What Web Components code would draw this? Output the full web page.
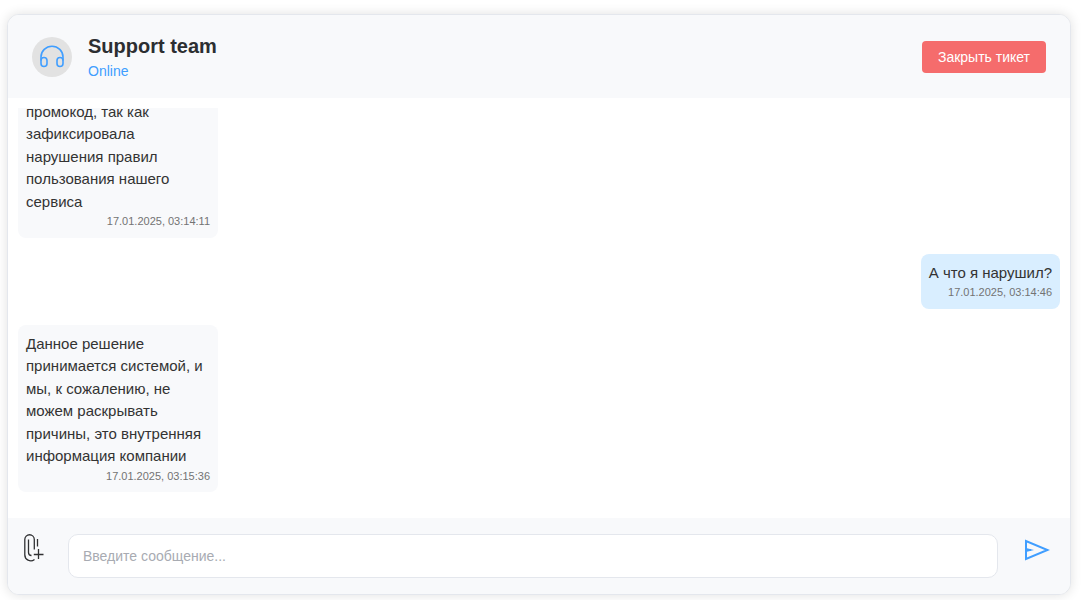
<!DOCTYPE html>
<html lang="ru">
<head>
<meta charset="utf-8">
<meta name="viewport" content="width=device-width, initial-scale=1">
<title>Support team</title>
<style>
  body { margin: 0; background: #fff; color: #2c2e31; font-family: "Liberation Sans", Arial, sans-serif; }
</style>
</head>
<body>
<support-chat>
  <chat-header slot="header" name="Support team" status="Online">
    <close-button>Закрыть тикет</close-button>
  </chat-header>
  <chat-message time="17.01.2025, 03:14:11">промокод, так как зафиксировала нарушения правил пользования нашего сервиса</chat-message>
  <chat-message mine time="17.01.2025, 03:14:46">А что я нарушил?</chat-message>
  <chat-message time="17.01.2025, 03:15:36">Данное решение принимается системой, и мы, к сожалению, не можем раскрывать причины, это внутренняя информация компании</chat-message>
  <chat-composer slot="footer"></chat-composer>
</support-chat>
<script>
  class BaseElement extends HTMLElement {
    constructor() {
      super();
      this.attachShadow({ mode: "open" }).innerHTML = "<style>*{box-sizing:border-box}:host{box-sizing:border-box}</style>" + this.constructor.markup;
    }
  }

  customElements.define("support-chat", class extends BaseElement {
    static markup = `
      <style>
        :host { display: block; height: 100vh; padding: 14px 11px 5px 7px; }
        section { display: flex; flex-direction: column; height: 100%; border: 1px solid #e4e7ed; border-radius: 12px; overflow: hidden; background: #fff; box-shadow: 0 0 12px rgba(0, 0, 0, .12); }
        main { flex: 1; min-height: 0; padding: 10px; display: flex; }
        .list { flex: 1; display: flex; flex-direction: column; justify-content: flex-end; gap: 16px; padding-bottom: 16px; overflow: hidden; }
      </style>
      <section>
        <slot name="header"></slot>
        <main><div class="list"><slot></slot></div></main>
        <slot name="footer"></slot>
      </section>`;
  });

  customElements.define("chat-header", class extends BaseElement {
    static markup = `
      <style>
        :host { display: block; flex: none; }
        header { display: flex; align-items: center; gap: 16px; padding: 16px 24px; background: #f8f9fb; }
        .avatar { width: 40px; height: 40px; border-radius: 50%; background: #e2e2e2; display: grid; place-items: center; }
        svg { width: 24px; height: 24px; display: block; }
        .who { flex: 1; }
        h1 { margin: 0; font-size: 20px; line-height: 30px; font-weight: 700; }
        p { margin: 0; font-size: 14px; line-height: 21px; color: #409eff; }
      </style>
      <header>
        <div class="avatar">
          <svg viewBox="0 0 24 24" fill="none" stroke="#409eff" stroke-width="1.6" aria-hidden="true">
            <path d="M1 15.500V12a11 10.800 0 0 1 22 0v3.500"/>
            <rect x="1" y="12.500" width="6" height="9" rx="3"/>
            <rect x="17" y="12.500" width="6" height="9" rx="3"/>
          </svg>
        </div>
        <div class="who"><h1></h1><p></p></div>
        <slot></slot>
      </header>`;
    connectedCallback() {
      this.shadowRoot.querySelector("h1").textContent = this.getAttribute("name");
      this.shadowRoot.querySelector("p").textContent = this.getAttribute("status");
    }
  });

  customElements.define("close-button", class extends BaseElement {
    static markup = `
      <style>
        :host { display: block; }
        button { display: block; height: 32px; padding: 0 16px; border: 0; border-radius: 4px; background: #f56c6c; color: #fff; font: 14px "Liberation Sans", Arial, sans-serif; cursor: pointer; }
      </style>
      <button type="button"><slot></slot></button>`;
  });

  customElements.define("chat-message", class extends BaseElement {
    static markup = `
      <style>
        :host { display: block; flex: none; max-width: 200px; padding: 8px; border-radius: 8px; background: #f8f9fb; align-self: flex-start; font-size: 15px; line-height: 1.5; color: #333; }
        :host([mine]) { align-self: flex-end; background: #d9eeff; }
        p { margin: 0; }
        time { display: block; font-size: 11px; text-align: right; color: #737373; }
      </style>
      <p><slot></slot></p><time></time>`;
    connectedCallback() {
      this.shadowRoot.querySelector("time").textContent = this.getAttribute("time");
    }
  });

  customElements.define("chat-composer", class extends BaseElement {
    static markup = `
      <style>
        :host { display: block; flex: none; }
        form { display: flex; align-items: flex-start; padding: 16px; background: #f8f9fb; }
        button { flex: none; display: block; padding: 0; border: 0; background: none; cursor: pointer; }
        .attach { width: 20px; margin-right: 24px; }
        .send { width: 32px; height: 32px; margin-left: 24px; }
        svg { display: block; margin: auto; }
        .send svg { margin: 0 auto 0 2px; }
        input { flex: 1; min-width: 0; height: 44px; padding: 0 14px; border: 1px solid #e4e7ed; border-radius: 10px; background: #fff; color: #303133; font: 14px "Liberation Sans", Arial, sans-serif; }
        input::placeholder { color: #a8abb2; opacity: 1; }
      </style>
      <form>
        <button class="attach" type="button" aria-label="Прикрепить файл">
          <svg width="20" height="28" viewBox="0 0 20 28" fill="none" stroke="#303133" stroke-width="1.3" aria-hidden="true">
            <path d="M10.300 15.500V5.500A4.700 4.700 0 0 0 .8 5.500V20.500A6 6 0 0 0 10.500 25.500"/>
            <path d="M4.500 5.500V18.500A3 3 0 0 0 7.500 21.500"/>
            <path d="M13.500 5V12.500M14.500 15V25M9.800 20.500H19.500"/>
          </svg>
        </button>
        <input type="text" aria-label="Сообщение" placeholder="Введите сообщение...">
        <button class="send" type="submit" aria-label="Отправить">
          <svg width="26" height="22" viewBox="0 0 26 22" fill="none" stroke="#409eff" stroke-width="2" aria-hidden="true">
            <path d="M2 2V20L23.500 11Z M2 11H7"/>
            <path d="M2 9L10 11L2 13Z" fill="#409eff" stroke="none"/>
          </svg>
        </button>
      </form>`;
    connectedCallback() {
      this.shadowRoot.querySelector("form").addEventListener("submit", e => e.preventDefault());
    }
  });
</script>
</body>
</html>
